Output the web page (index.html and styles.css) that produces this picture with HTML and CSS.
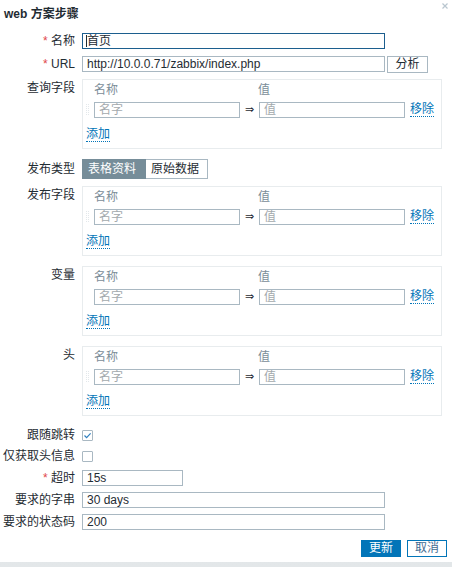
FILE: index.html
```html
<!DOCTYPE html>
<html lang="zh">
<head>
<meta charset="utf-8">
<title>web 方案步骤</title>
<link rel="stylesheet" href="styles.css">
</head>
<body>
<div class="dialog">
  <div class="head">
    <h1 class="title">web 方案步骤</h1>
    <svg class="close" width="6" height="6" viewBox="0 0 6 6"><path d="M0.5 0.5L5.5 5.5M5.5 0.5L0.5 5.5" stroke="#b9c6cf" stroke-width="1.2"/></svg>
  </div>
  <div class="form">
    <div class="row">
      <div class="lbl"><span class="req">*</span> 名称</div>
      <div class="field"><div class="inp wide focus"><span class="caret"></span>首页</div></div>
    </div>
    <div class="row mt7">
      <div class="lbl"><span class="req">*</span> URL</div>
      <div class="field url-field"><div class="inp wide">http://10.0.0.71/zabbix/index.php</div><button class="btn-grey">分析</button></div>
    </div>
    <div class="row mt7 top">
      <div class="lbl boxlbl">查询字段</div>
      <div class="field">
        <div class="box">
          <div class="bhead"><span class="hname">名称</span><span class="hval">值</span></div>
          <div class="brow"><span class="drag"></span><div class="inp small ph">名字</div><span class="arrow">⇒</span><div class="inp small ph">值</div><a class="link rm">移除</a></div>
          <div class="badd"><a class="link">添加</a></div>
        </div>
      </div>
    </div>
    <div class="row mt10 radio-row">
      <div class="lbl">发布类型</div>
      <div class="field"><div class="radios"><span class="rad on">表格资料</span><span class="rad">原始数据</span></div></div>
    </div>
    <div class="row mt7 top">
      <div class="lbl boxlbl">发布字段</div>
      <div class="field">
        <div class="box">
          <div class="bhead"><span class="hname">名称</span><span class="hval">值</span></div>
          <div class="brow"><span class="drag"></span><div class="inp small ph">名字</div><span class="arrow">⇒</span><div class="inp small ph">值</div><a class="link rm">移除</a></div>
          <div class="badd"><a class="link">添加</a></div>
        </div>
      </div>
    </div>
    <div class="row mt10 top">
      <div class="lbl boxlbl">变量</div>
      <div class="field">
        <div class="box">
          <div class="bhead"><span class="hname">名称</span><span class="hval">值</span></div>
          <div class="brow"><span class="nodrag"></span><div class="inp small ph">名字</div><span class="arrow">⇒</span><div class="inp small ph">值</div><a class="link rm">移除</a></div>
          <div class="badd"><a class="link">添加</a></div>
        </div>
      </div>
    </div>
    <div class="row mt10 top">
      <div class="lbl boxlbl">头</div>
      <div class="field">
        <div class="box">
          <div class="bhead"><span class="hname">名称</span><span class="hval">值</span></div>
          <div class="brow"><span class="drag"></span><div class="inp small ph">名字</div><span class="arrow">⇒</span><div class="inp small ph">值</div><a class="link rm">移除</a></div>
          <div class="badd"><a class="link">添加</a></div>
        </div>
      </div>
    </div>
    <div class="row mt11">
      <div class="lbl">跟随跳转</div>
      <div class="field"><span class="cb"><svg width="9" height="9" viewBox="0 0 9 9"><path d="M1.5 4.5L3.6 6.6L7.6 2.4" fill="none" stroke="#2f7fbf" stroke-width="1.2"/></svg></span></div>
    </div>
    <div class="row mt5">
      <div class="lbl">仅获取头信息</div>
      <div class="field"><span class="cb"></span></div>
    </div>
    <div class="row mt6">
      <div class="lbl"><span class="req">*</span> 超时</div>
      <div class="field"><div class="inp short">15s</div></div>
    </div>
    <div class="row mt6">
      <div class="lbl">要求的字串</div>
      <div class="field"><div class="inp wide">30 days</div></div>
    </div>
    <div class="row mt6">
      <div class="lbl">要求的状态码</div>
      <div class="field"><div class="inp wide">200</div></div>
    </div>
  </div>
  <div class="footer">
    <button class="btn-main">更新</button>
    <button class="btn-alt">取消</button>
  </div>
</div>
</body>
</html>
```

FILE: styles.css
```css
html, body {
  margin: 0;
  padding: 0;
}
body {
  background: linear-gradient(#cfd5d8, #e3e7e9);
  font-family: "Liberation Sans", Arial, "Noto Sans CJK SC", sans-serif;
  font-size: 12px;
  color: #1f2c33;
  width: 452px;
  height: 567px;
  overflow: hidden;
}
.dialog {
  background: #ffffff;
  height: 562px;
  position: relative;
}
.head {
  height: 33px;
  position: relative;
}
.title {
  margin: 0;
  padding: 6px 0 0 4px;
  height: 16px;
  font-size: 12px;
  line-height: 16px;
  font-weight: bold;
  color: #1f2c33;
}
.close {
  position: absolute;
  top: 3px;
  left: 442px;
}
.form {
  display: flex;
  flex-direction: column;
}
.row {
  display: flex;
  align-items: center;
  height: 16px;
}
.row.top {
  align-items: flex-start;
  height: auto;
}
.row.radio-row {
  height: 20px;
}
.mt5 { margin-top: 5px; }
.mt6 { margin-top: 6px; }
.mt7 { margin-top: 7px; }
.mt10 { margin-top: 10px; }
.mt11 { margin-top: 11px; }
.lbl {
  width: 75px;
  height: 16px;
  flex-shrink: 0;
  text-align: right;
  line-height: 16px;
  white-space: nowrap;
  color: #1f2c33;
}
.boxlbl {
  padding-top: 1px;
}
.req {
  color: #e0464a;
}
.field {
  margin-left: 7px;
  display: flex;
  align-items: center;
}
.inp {
  box-sizing: border-box;
  height: 16px;
  border: 1px solid #a9b8c2;
  padding: 0 4px;
  line-height: 14px;
  font-size: 12px;
  color: #1f2c33;
  white-space: nowrap;
  overflow: hidden;
  background: #fff;
}
.inp.wide {
  width: 303px;
}
.inp.short {
  width: 101px;
}
.inp.focus {
  border-color: #1c5e8e;
  padding-left: 3px;
}
.caret {
  display: inline-block;
  width: 1px;
  height: 12px;
  background: #1f2c33;
  vertical-align: -2px;
}
.inp.small {
  width: 146px;
}
.inp.ph {
  color: #a3a9ad;
}
.url-field {
  gap: 2px;
}
.btn-grey {
  box-sizing: border-box;
  height: 17px;
  width: 41px;
  border: 1px solid #a9b8c2;
  background: #fff;
  font-family: inherit;
  font-size: 12px;
  color: #1f2c33;
  padding: 0;
  line-height: 15px;
  margin-top: 1px;
}
.box {
  box-sizing: border-box;
  width: 360px;
  height: 70px;
  border: 1px solid #e8ecee;
  padding: 0 0 0 3px;
}
.bhead {
  height: 22px;
  line-height: 20px;
  color: #7b8d98;
  display: flex;
}
.hname {
  margin-left: 8px;
  width: 164px;
}
.brow {
  display: flex;
  align-items: center;
  height: 16px;
}
.drag, .nodrag {
  width: 8px;
  height: 12px;
  flex-shrink: 0;
}
.drag {
  width: 3px;
  margin-right: 5px;
  background-image: linear-gradient(90deg, transparent 1px, #fff 1px, #fff 2px, transparent 2px),
                    linear-gradient(#e3e8eb 1px, #fff 1px);
  background-size: 3px 2px;
}
.arrow {
  width: 19px;
  text-align: center;
  font-family: "DejaVu Sans", sans-serif;
  font-size: 11px;
  line-height: 16px;
  color: #1f2c33;
}
.link {
  color: #0275b8;
  border-bottom: 1px dotted #0275b8;
  line-height: 13px;
  height: 13px;
  display: inline-block;
  cursor: pointer;
}
.rm {
  margin-left: 5px;
}
.badd {
  padding-top: 9px;
  height: 14px;
}
.radios {
  display: flex;
  height: 20px;
}
.rad {
  box-sizing: border-box;
  height: 20px;
  line-height: 18px;
  border: 1px solid #a9b8c2;
  padding: 0 5px;
  background: #fff;
  color: #1f2c33;
}
.rad.on {
  width: 64px;
  background: #768d99;
  border-color: #768d99;
  color: #ffffff;
}
.rad + .rad {
  width: 62px;
  border-left: none;
}
.cb {
  box-sizing: border-box;
  width: 11px;
  height: 11px;
  border: 1px solid #a9b8c2;
  display: flex;
  align-items: center;
  justify-content: center;
  border-radius: 1px;
}
.footer {
  display: flex;
  justify-content: flex-end;
  gap: 6px;
  margin-top: 10px;
  padding-right: 5px;
}
.footer button {
  box-sizing: border-box;
  width: 40px;
  height: 17px;
  padding: 0;
  font-family: inherit;
  font-size: 12px;
  line-height: 15px;
}
.btn-main {
  background: #0275b8;
  border: 1px solid #0275b8;
  color: #fff;
}
.btn-alt {
  background: #fff;
  border: 1px solid #0275b8;
  color: #3f6c92;
}
```
